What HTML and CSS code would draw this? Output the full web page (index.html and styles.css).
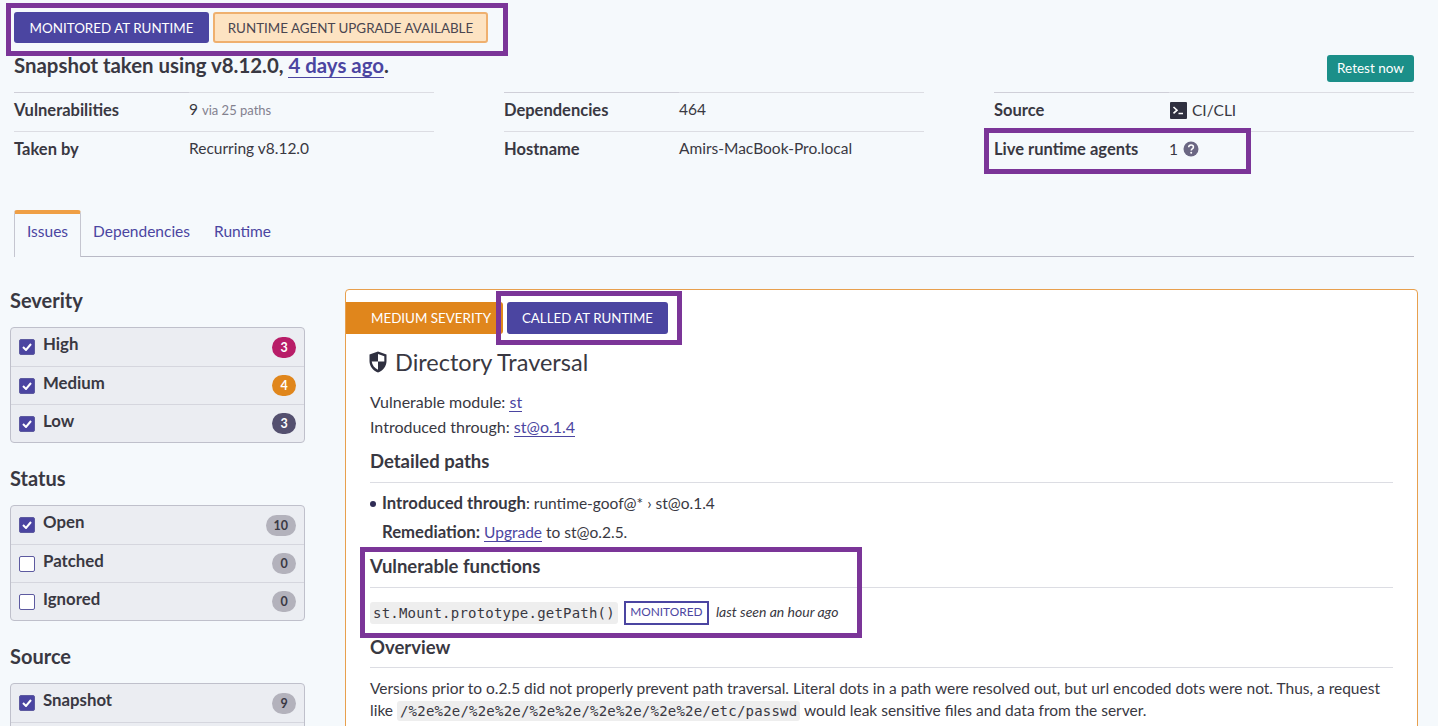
FILE: index.html
```html
<!DOCTYPE html>
<html>
<head>
<meta charset="utf-8">
<title>Snapshot</title>
<link rel="stylesheet" href="styles.css">
</head>
<body>
<div class="page">
	<div class="tags">
		<span class="tag tagPrimary">MONITORED AT RUNTIME</span>
		<span class="tag tagWarn">RUNTIME AGENT UPGRADE AVAILABLE</span>
	</div>
	<div class="headRow">
		<h2 class="snapTitle">Snapshot taken using v8.12.0, <a href="#">4 days ago</a>.</h2>
		<a class="btnRetest" href="#">Retest now</a>
	</div>
	<div class="metaGrid">
		<dl class="meta">
			<dt>Vulnerabilities</dt><dd>9 <small>via 25 paths</small></dd>
			<dt>Taken by</dt><dd>Recurring v8.12.0</dd>
		</dl>
		<dl class="meta">
			<dt>Dependencies</dt><dd>464</dd>
			<dt>Hostname</dt><dd>Amirs-MacBook-Pro.local</dd>
		</dl>
		<dl class="meta">
			<dt>Source</dt>
			<dd class="iconValue">
				<svg class="termIcon" width="17" height="17" viewBox="0 0 17 17"><rect width="17" height="17" rx="1" fill="#2f3040"/><path d="M3.5 5l3.5 3.2-3.5 3.2" fill="none" stroke="#fff" stroke-width="1.6"/><path d="M8.500 11.500h4.500" stroke="#fff" stroke-width="1.500"/></svg>
				CI/CLI
			</dd>
			<dt>Live runtime agents</dt>
			<dd class="iconValue">1
				<svg width="16" height="16" viewBox="0 0 16 16"><circle cx="8" cy="8" r="7.500" fill="#6b6783"/><path d="M5.700 6.200c0-1.400 1-2.200 2.400-2.200s2.300.8 2.300 2c0 1-.6 1.500-1.200 1.900-.6.400-.9.700-.9 1.500" fill="none" stroke="#fff" stroke-width="1.600"/><circle cx="8.200" cy="11.800" r="1" fill="#fff"/></svg>
			</dd>
		</dl>
	</div>
	<div class="tabs">
		<a class="tab tabActive" href="#">Issues</a>
		<a class="tab" href="#">Dependencies</a>
		<a class="tab" href="#">Runtime</a>
	</div>
	<div class="columns">
		<div class="sidebar">
			<h3>Severity</h3>
			<div class="filterBox">
				<div class="filterRow"><span class="check on"><svg width="10" height="8" viewBox="0 0 10 8"><path d="M1 4l3 3 5-6" fill="none" stroke="#fff" stroke-width="2"/></svg></span><span class="filterName">High</span><span class="count countHigh">3</span></div>
				<div class="filterRow"><span class="check on"><svg width="10" height="8" viewBox="0 0 10 8"><path d="M1 4l3 3 5-6" fill="none" stroke="#fff" stroke-width="2"/></svg></span><span class="filterName">Medium</span><span class="count countMedium">4</span></div>
				<div class="filterRow"><span class="check on"><svg width="10" height="8" viewBox="0 0 10 8"><path d="M1 4l3 3 5-6" fill="none" stroke="#fff" stroke-width="2"/></svg></span><span class="filterName">Low</span><span class="count countLow">3</span></div>
			</div>
			<h3>Status</h3>
			<div class="filterBox">
				<div class="filterRow"><span class="check on"><svg width="10" height="8" viewBox="0 0 10 8"><path d="M1 4l3 3 5-6" fill="none" stroke="#fff" stroke-width="2"/></svg></span><span class="filterName">Open</span><span class="count">10</span></div>
				<div class="filterRow"><span class="check"></span><span class="filterName">Patched</span><span class="count">0</span></div>
				<div class="filterRow"><span class="check"></span><span class="filterName">Ignored</span><span class="count">0</span></div>
			</div>
			<h3>Source</h3>
			<div class="filterBox">
				<div class="filterRow"><span class="check on"><svg width="10" height="8" viewBox="0 0 10 8"><path d="M1 4l3 3 5-6" fill="none" stroke="#fff" stroke-width="2"/></svg></span><span class="filterName">Snapshot</span><span class="count">9</span></div>
				<div class="filterRow"></div>
			</div>
		</div>
		<div class="card">
			<div class="cardTags">
				<span class="sevTag">MEDIUM SEVERITY</span>
				<span class="tag tagPrimary tagCalled">CALLED AT RUNTIME</span>
			</div>
			<div class="cardBody">
				<h1 class="issueTitle">
					<svg width="18" height="22" viewBox="0 0 18 22"><path d="M9 0.500L17.500 3.500V10c0 5.500-3.500 9.500-8.500 11.500C4 19.500.500 15.500.500 10V3.500z" fill="#2f3040"/><path d="M9 3L15.300 5.200V10.500H9zM9 10.500H2.700c.4 3.700 2.900 6.600 6.300 8.300z" fill="#fff"/></svg>
					Directory Traversal
				</h1>
				<p class="line">Vulnerable module: <a href="#">st</a></p>
				<p class="line">Introduced through: <a href="#">st@o.1.4</a></p>
				<h4>Detailed paths</h4>
				<div class="pathItem"><span class="bullet"></span><b>Introduced through</b>: runtime-goof@* › st@o.1.4</div>
				<div class="remedy"><b>Remediation:</b> <a href="#">Upgrade</a> to st@o.2.5.</div>
				<h4 class="vulnHead">Vulnerable functions</h4>
				<div class="funcRow">
					<code>st.Mount.prototype.getPath()</code>
					<span class="monitored">MONITORED</span>
					<em>last seen an hour ago</em>
				</div>
				<h4 class="overviewHead">Overview</h4>
				<p class="para">Versions prior to o.2.5 did not properly prevent path traversal. Literal dots in a path were resolved out, but url encoded dots were not. Thus, a request like <code>/%2e%2e/%2e%2e/%2e%2e/%2e%2e/%2e%2e/etc/passwd</code> would leak sensitive files and data from the server.</p>
			</div>
		</div>
	</div>
	<!-- highlight boxes drawn over the screenshot -->
	<div class="mark markTags"></div>
	<div class="mark markAgents"></div>
	<div class="mark markCalled"></div>
	<div class="mark markFunctions"></div>
</div>
</body>
</html>
```

FILE: styles.css
```css
html, body { margin: 0; height: 100%; overflow: hidden; }
body { background: #f5f9fc; color: #393842; font-family: "Lato", "Open Sans", sans-serif; font-size: 15.500px; }
a { color: #4b45a1; text-decoration: none; border-bottom: 1px solid #4b45a1; }
b { font-size: 16.700px; }

.page { position: relative; height: 726px; overflow: hidden; padding: 12px 24px 0 14px; box-sizing: border-box; }

.tags { display: flex; gap: 4px; }
.tag { display: flex; align-items: center; justify-content: center; box-sizing: border-box; height: 31px; border-radius: 3px; font-size: 13.400px; }
.tagPrimary { background: #4b45a1; color: #fff; width: 195px; }
.tagWarn { background: #fde3c2; color: #4a4650; border: 2px solid #efb06f; width: 275px; }

.headRow { display: flex; justify-content: space-between; height: 49px; }
.snapTitle { margin: 9px 0 0; font-size: 20.400px; font-weight: 700; line-height: 26px; }
.btnRetest { align-self: flex-start; margin-top: 12px; width: 87px; height: 27px; line-height: 27px; text-align: center; background: #1b8f89; color: #fff; font-size: 13.500px; border: 0; border-radius: 3px; }

.metaGrid { display: flex; gap: 70px; }
.meta { display: grid; grid-template-columns: 175px 245px; width: 420px; margin: 0; }
.meta dt, .meta dd { margin: 0; height: 39px; line-height: 33px; border-top: 1px solid #dcdde3; box-sizing: border-box; }
.meta dt { font-size: 16.500px; font-weight: 700; border-top-color: #cfcfd8; line-height: 34px; }
.meta dt:nth-of-type(2), .meta dd:nth-of-type(2) { border-top-color: #dcdde3; }
.meta small { color: #83818f; font-size: 13px; }
.iconValue { display: flex; align-items: center; gap: 5px; padding-bottom: 4px; }
.termIcon { margin-left: 1px; }

.tabs { display: flex; margin-top: 40px; height: 46px; border-bottom: 1px solid #b9bac6; }
.tab { height: 46px; box-sizing: border-box; padding: 11px 12px 0; line-height: 20px; font-size: 15.500px; border: 0; }
.tabActive { border: 1px solid #c5c6d0; border-top: 4px solid #ef9f45; border-bottom: 0; border-radius: 3px 3px 0 0; background: #f5f9fc; height: 47px; padding: 7px 12px 0; }

.columns { display: flex; align-items: flex-start; margin-left: -4px; }
.sidebar { width: 295px; flex: none; }
.sidebar h3 { margin: 22px 0 14px; font-size: 20px; line-height: 26px; font-weight: 700; height: 26px; }
.sidebar h3:first-child { margin-top: 30px; }
.filterBox { background: #ebedf2; border: 1px solid #bfc0cb; border-radius: 4px; }
.filterRow { display: flex; align-items: center; height: 38px; padding: 0 8px; border-top: 1px solid #d5d6de; box-sizing: border-box; }
.filterRow:first-child { border-top: 0; }
.check { display: flex; align-items: center; justify-content: center; box-sizing: border-box; width: 16px; height: 16px; background: #fff; border: 1px solid #5d5aa0; border-radius: 2px; margin-right: 8px; }
.check.on { background: #4b45a1; }
.filterName { flex: 1; font-size: 16.800px; font-weight: 700; margin-top: -7px; }
.count { min-width: 24px; height: 21px; line-height: 21px; padding: 0 8px; box-sizing: border-box; text-align: center; border-radius: 11px; background: #b3b2bc; font-size: 12.500px; font-weight: 700; color: #3a3944; }
.countHigh { background: #b81d68; color: #fff; }
.countMedium { background: #e0861c; color: #fff; }
.countLow { background: #54506f; color: #fff; }

.card { flex: none; box-sizing: border-box; width: 1073px; height: 600px; margin: 32px 0 0 40px; background: #fff; border: 1px solid #e8a04e; border-radius: 4px; }
.cardTags { display: flex; gap: 4px; margin-top: 12px; }
.sevTag { display: flex; align-items: center; box-sizing: border-box; width: 157px; height: 32px; padding-left: 25px; background: #e0861c; color: #fff; font-size: 13.400px; border-radius: 0 3px 3px 0; }
.tagCalled { width: 161px; height: 32px; font-size: 13.300px; }
.cardBody { padding: 0 24px 0 24px; }
.issueTitle { display: flex; align-items: center; gap: 8px; margin: 12px 0 0 -1px; font-size: 23.500px; line-height: 32px; font-weight: 400; }
.line { margin: 0; height: 25px; line-height: 25px; font-size: 16px; }
.issueTitle + .line { margin-top: 11px; }
h4 { margin: 0; font-size: 18.500px; font-weight: 700; line-height: 24px; padding-bottom: 9px; border-bottom: 1px solid #dcdde3; }
.line + h4 { margin-top: 10px; }
.pathItem { position: relative; margin-top: 8px; padding-left: 12px; line-height: 24px; }
.bullet { position: absolute; left: 0; top: 10px; width: 6px; height: 6px; border-radius: 50%; background: #2f2c55; }
.remedy { margin-top: 5px; padding-left: 12px; line-height: 24px; }
.vulnHead { margin-top: 10px; }
.funcRow { display: flex; align-items: center; gap: 6px; margin-top: 12px; height: 25px; }
code { font-family: "DejaVu Sans Mono", "Liberation Mono", monospace; background: #eeeeee; border-radius: 3px; font-size: 14px; letter-spacing: .21px; padding: 3px 3px; }
.monitored { box-sizing: border-box; border: 2px solid #4b45a1; color: #4b45a1; font-size: 11.900px; height: 24px; line-height: 18px; width: 85px; text-align: center; }
.funcRow em { font-size: 14px; margin-left: 1px; margin-top: -3px; }
.overviewHead { margin-top: 10px; padding-bottom: 8px; }
.para { margin: 9px 0 0; line-height: 22px; }
.para code { padding: 2px 3px; }

.mark { position: absolute; box-sizing: border-box; border: 5px solid #7b3598; pointer-events: none; }
.markTags { left: 6px; top: 3px; width: 502px; height: 53px; }
.markAgents { left: 984px; top: 128px; width: 267px; height: 46px; }
.markCalled { left: 496px; top: 291px; width: 186px; height: 54px; }
.markFunctions { left: 360px; top: 547px; width: 502px; height: 91px; }
```
